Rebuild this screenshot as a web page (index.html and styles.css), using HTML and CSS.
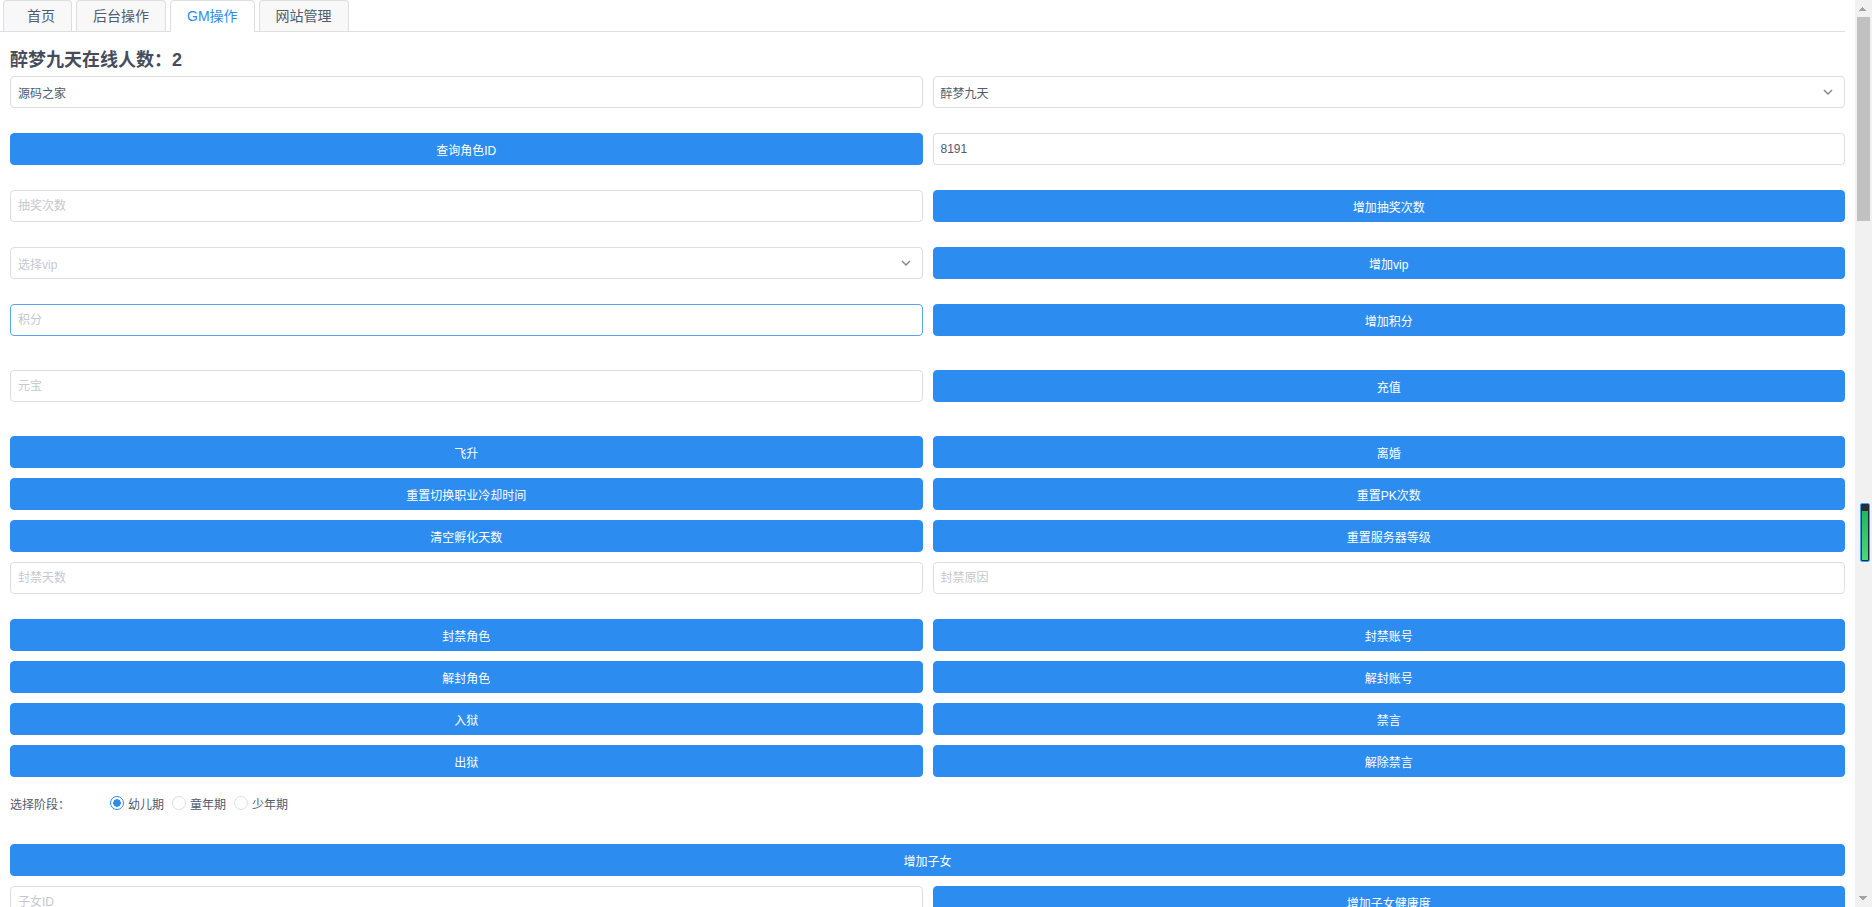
FILE: index.html
```html
<!DOCTYPE html>
<html lang="zh-CN">
<head>
    <meta charset="UTF-8">
    <meta name="viewport" content="width=device-width, initial-scale=1.0">
    <title>GM操作</title>
    <link rel="stylesheet" href="styles.css">
</head>
<body>

<div class="page">
    <ul class="tabs">
        <li class="tab first">首页</li>
        <li class="tab">后台操作</li>
        <li class="tab active">GM操作</li>
        <li class="tab">网站管理</li>
    </ul>

    <div class="main">
        <h2 class="title">醉梦九天在线人数：2</h2>

        <div class="row">
            <input class="input" type="text" value="源码之家">
            <div class="select">
                <span>醉梦九天</span>
                <svg class="arrow" width="10" height="6" viewBox="0 0 10 6"><path d="M1 1l4 4 4-4" fill="none" stroke="#808695" stroke-width="1.4"/></svg>
            </div>
        </div>

        <div class="row">
            <button class="btn">查询角色ID</button>
            <input class="input" type="text" value="8191">
        </div>

        <div class="row">
            <input class="input" type="text" placeholder="抽奖次数">
            <button class="btn">增加抽奖次数</button>
        </div>

        <div class="row">
            <div class="select">
                <span class="placeholder">选择vip</span>
                <svg class="arrow" width="10" height="6" viewBox="0 0 10 6"><path d="M1 1l4 4 4-4" fill="none" stroke="#808695" stroke-width="1.4"/></svg>
            </div>
            <button class="btn">增加vip</button>
        </div>

        <div class="row lg">
            <input class="input focus" type="text" placeholder="积分">
            <button class="btn">增加积分</button>
        </div>

        <div class="row lg">
            <input class="input" type="text" placeholder="元宝">
            <button class="btn">充值</button>
        </div>

        <div class="row sm">
            <button class="btn">飞升</button>
            <button class="btn">离婚</button>
        </div>
        <div class="row sm">
            <button class="btn">重置切换职业冷却时间</button>
            <button class="btn">重置PK次数</button>
        </div>
        <div class="row sm">
            <button class="btn">清空孵化天数</button>
            <button class="btn">重置服务器等级</button>
        </div>

        <div class="row">
            <input class="input" type="text" placeholder="封禁天数">
            <input class="input" type="text" placeholder="封禁原因">
        </div>

        <div class="row sm">
            <button class="btn">封禁角色</button>
            <button class="btn">封禁账号</button>
        </div>
        <div class="row sm">
            <button class="btn">解封角色</button>
            <button class="btn">解封账号</button>
        </div>
        <div class="row sm">
            <button class="btn">入狱</button>
            <button class="btn">禁言</button>
        </div>
        <div class="row sm">
            <button class="btn">出狱</button>
            <button class="btn">解除禁言</button>
        </div>

        <div class="radio-row">
            <span class="radio-label">选择阶段：</span>
            <label class="radio-item"><span class="radio checked"></span>幼儿期</label>
            <label class="radio-item"><span class="radio"></span>童年期</label>
            <label class="radio-item"><span class="radio"></span>少年期</label>
        </div>

        <div class="row-full">
            <button class="btn">增加子女</button>
        </div>

        <div class="row">
            <input class="input" type="text" placeholder="子女ID">
            <button class="btn">增加子女健康度</button>
        </div>

        <div class="row">
            <input class="input" type="text" placeholder="物品ID">
            <input class="input" type="text" placeholder="物品数量">
        </div>
        <div class="row">
            <button class="btn">发送物品</button>
            <button class="btn">发送全服物品</button>
        </div>
        <div class="row">
            <input class="input" type="text" placeholder="公告内容">
            <button class="btn">发送公告</button>
        </div>
    </div>
</div>

<!-- page scrollbar -->
<div class="scrollbar">
    <div class="sb-btn up"></div>
    <div class="sb-track">
        <div class="sb-thumb"></div>
    </div>
    <div class="sb-btn down"></div>
</div>

<div class="float-bar"></div>

</body>
</html>
```

FILE: styles.css
```css
html, body {
    margin: 0;
    height: 100%;
}

body {
    font-family: "Liberation Sans", "Noto Sans CJK SC", sans-serif;
    font-size: 12px;
    color: #515a6e;
    background-color: #fff;
    overflow: hidden;
    display: flex;
}

.page {
    flex: 1;
    min-width: 0;
    height: 100%;
    overflow: hidden;
}

/* scrollbar */
.scrollbar {
    width: 17px;
    height: 100%;
    display: flex;
    flex-direction: column;
    background-color: #f1f1f1;
}

.sb-btn {
    height: 17px;
    background-repeat: no-repeat;
    background-size: 4px 4px;
}

.sb-btn.up {
    background-image:
        linear-gradient(to bottom right, transparent 50%, #a3a3a3 50%),
        linear-gradient(to bottom left, transparent 50%, #a3a3a3 50%);
    background-position: 4px 7px, 8px 7px;
}

.sb-btn.down {
    background-image:
        linear-gradient(to top right, transparent 50%, #a3a3a3 50%),
        linear-gradient(to top left, transparent 50%, #a3a3a3 50%);
    background-position: 4px 6px, 8px 6px;
}

.sb-track {
    flex: 1;
}

.sb-thumb {
    height: 204px;
    margin: 0 2px;
    background-color: #c1c1c1;
}

/* tabs */
.tabs {
    list-style: none;
    display: flex;
    gap: 4px;
    margin: 0 10px 0 0;
    padding: 0 0 0 3px;
    border-bottom: 1px solid #dcdee2;
}

.tab {
    height: 30px;
    line-height: 30px;
    padding: 0 16px;
    font-size: 14px;
    color: #515a6e;
    background-color: #f8f8f9;
    border: 1px solid #dcdee2;
    border-bottom: none;
    border-radius: 4px 4px 0 0;
    cursor: pointer;
}

.tab.first {
    padding: 0 16px 0 23px;
}

.tab.active {
    color: #2d8cf0;
    background-color: #fff;
    height: 31px;
    margin-bottom: -1px;
}

/* content */
.main {
    padding: 0 10px;
}

.title {
    font-size: 18px;
    line-height: 24px;
    font-weight: bold;
    color: #464c5b;
    margin: 16px 0 4px;
}

.row {
    display: grid;
    grid-template-columns: 1fr 1fr;
    column-gap: 10px;
    margin-bottom: 25px;
}

.row.sm {
    margin-bottom: 10px;
}

.row.lg {
    margin-bottom: 34px;
}

.row-full {
    margin-bottom: 10px;
}

.input {
    box-sizing: border-box;
    width: 100%;
    height: 32px;
    padding: 4px 7px;
    font-family: inherit;
    font-size: 12px;
    color: #515a6e;
    border: 1px solid #dcdee2;
    border-radius: 4px;
    outline: none;
}

.input::placeholder {
    color: #c5c8ce;
}

.input.focus {
    border-color: #57a3f3;
}

.select {
    box-sizing: border-box;
    height: 32px;
    padding: 0 11px 0 7px;
    display: flex;
    align-items: center;
    justify-content: space-between;
    border: 1px solid #dcdee2;
    border-radius: 4px;
    cursor: pointer;
}

.select .placeholder {
    color: #c5c8ce;
}

.btn {
    box-sizing: border-box;
    width: 100%;
    height: 32px;
    font-family: inherit;
    font-size: 12px;
    color: #fff;
    background-color: #2d8cf0;
    border: 1px solid #2d8cf0;
    border-radius: 4px;
    cursor: pointer;
}

/* radio */
.radio-row {
    display: flex;
    align-items: center;
    height: 32px;
    margin: 10px 0 25px;
}

.radio-label {
    width: 100px;
}

.radio-item {
    display: flex;
    align-items: center;
    margin-right: 8px;
    cursor: pointer;
}

.radio {
    box-sizing: border-box;
    width: 14px;
    height: 14px;
    margin-right: 4px;
    border: 1px solid #dcdee2;
    border-radius: 50%;
    background-color: #fff;
}

.radio.checked {
    border-color: #2d8cf0;
    background: radial-gradient(circle, #2d8cf0 3.5px, #fff 4px);
}

/* overlay on the right edge */
.float-bar {
    position: fixed;
    right: 2px;
    top: 503px;
    width: 10px;
    height: 59px;
    box-sizing: border-box;
    border: 1px solid #3fa0ff;
    border-radius: 2px;
    background: linear-gradient(to bottom, #2b2b38 0, #2b2b38 7px, #1fb85a 7px, #4fd67c 100%);
    box-shadow: inset 0 0 0 1px #1d2b3a;
}
```
